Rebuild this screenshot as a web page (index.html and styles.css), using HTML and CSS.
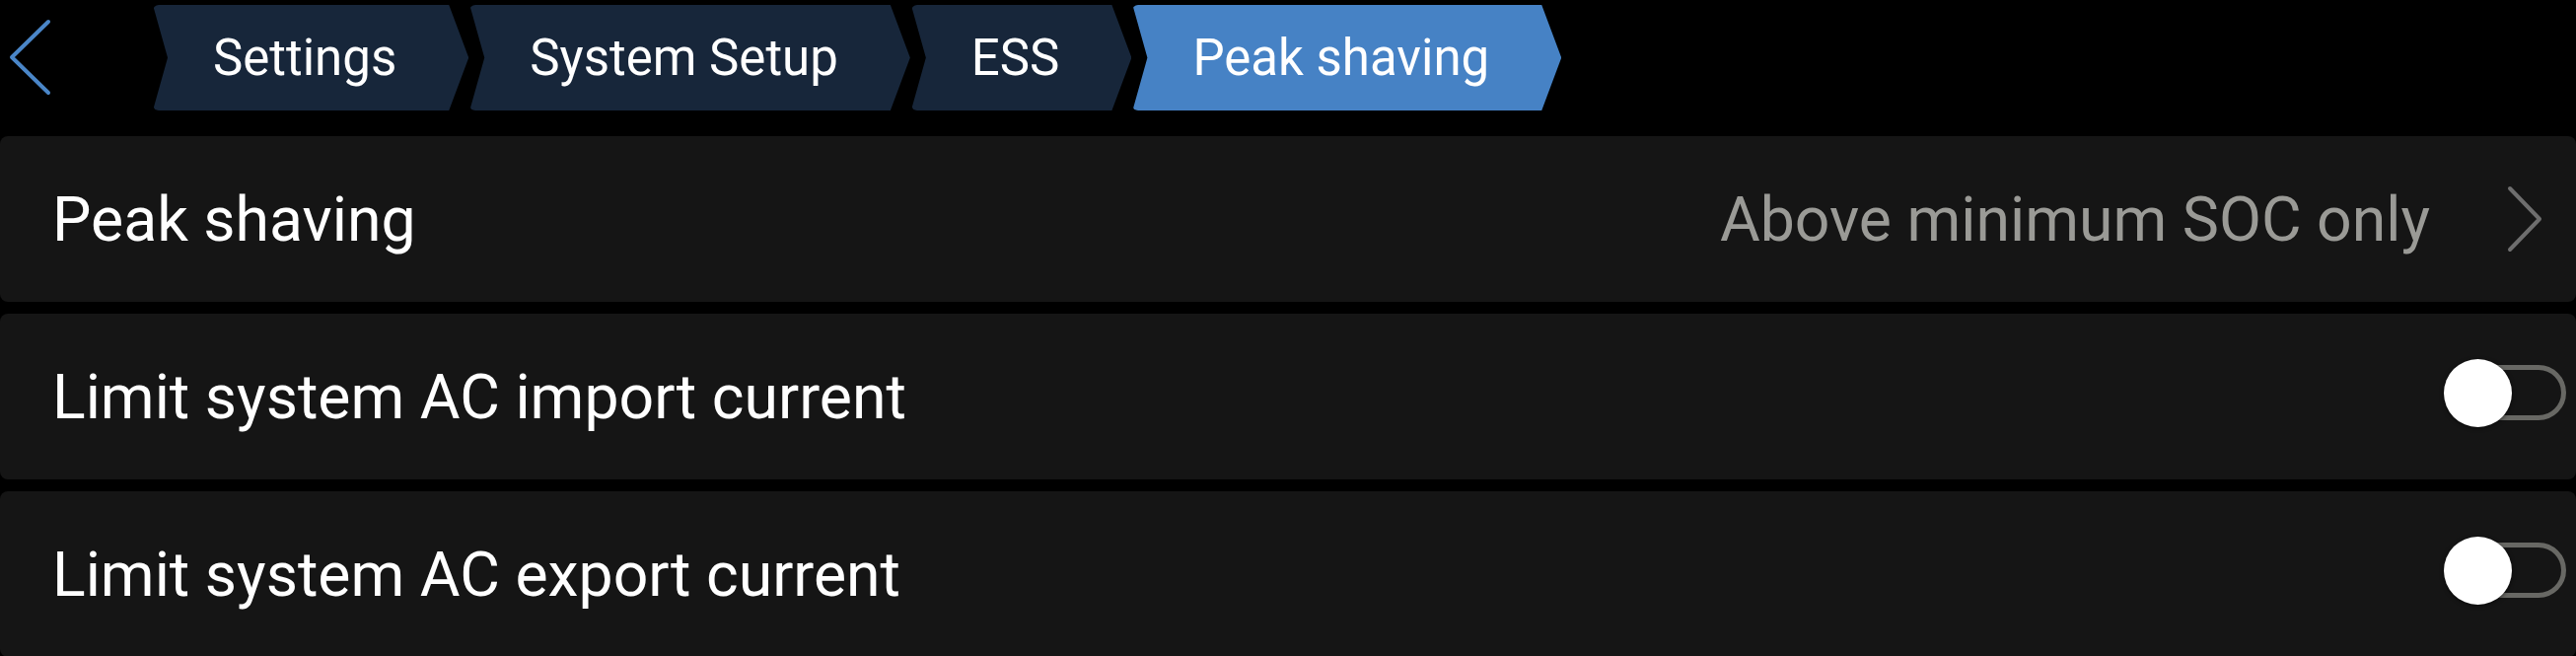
FILE: index.html
```html
<!DOCTYPE html>
<html lang="en">
<head>
    <meta charset="UTF-8">
    <meta name="viewport" content="width=device-width, initial-scale=1.0">
    <title>Peak shaving</title>
    <link rel="stylesheet" href="styles.css">
</head>
<body>
    <div class="header">
        <button class="back-button" aria-label="Back">
            <svg width="44" height="80" viewBox="0 0 44 80">
                <polyline points="40,3 3,39 40,75" fill="none" stroke="#4a86c8" stroke-width="4" stroke-linecap="round" stroke-linejoin="round"/>
            </svg>
        </button>
        <nav class="breadcrumbs">
            <div class="crumb">Settings</div>
            <div class="crumb">System Setup</div>
            <div class="crumb">ESS</div>
            <div class="crumb active">Peak shaving</div>
        </nav>
    </div>

    <div class="list">
        <div class="list-item">
            <span class="item-label">Peak shaving</span>
            <div class="item-value">
                <span class="value-text">Above minimum SOC only</span>
                <svg class="chevron" width="36" height="68" viewBox="0 0 36 68">
                    <polyline points="3,3 33,34 3,65" fill="none" stroke="#6e6e6e" stroke-width="4" stroke-linecap="round" stroke-linejoin="round"/>
                </svg>
            </div>
        </div>
        <div class="list-item">
            <span class="item-label">Limit system AC import current</span>
            <div class="switch"><span class="knob"></span></div>
        </div>
        <div class="list-item">
            <span class="item-label">Limit system AC export current</span>
            <div class="switch"><span class="knob"></span></div>
        </div>
    </div>
</body>
</html>
```

FILE: styles.css
```css
body {
    margin: 0;
    background: #000;
    color: #fff;
    font-family: Roboto, "Liberation Sans", sans-serif;
    overflow: hidden;
}

.header {
    display: flex;
    align-items: center;
    padding: 5px 0 26px;
}

.back-button {
    width: 155px;
    height: 107px;
    padding: 0 0 0 9px;
    border: none;
    background: none;
    display: flex;
    align-items: center;
    cursor: pointer;
}

.breadcrumbs {
    display: flex;
    gap: 1px;
}

.crumb {
    height: 107px;
    display: flex;
    align-items: center;
    padding: 0 73px 0 61px;
    font-size: 51px;
    color: #fff;
    background: #17263a;
    clip-path: polygon(0 0, calc(100% - 20px) 0, 100% 50%, calc(100% - 20px) 100%, 0 100%, 15px 50%);
    border-radius: 6px;
}

.crumb.active {
    background: #4682c5;
}

.list {
    display: flex;
    flex-direction: column;
    gap: 12px;
}

.list-item {
    height: 168px;
    background: #151515;
    border-radius: 8px;
    display: flex;
    align-items: center;
    justify-content: space-between;
    padding: 0 10px 0 53px;
}

.item-label {
    font-size: 62.5px;
    color: #fff;
}

.item-value {
    display: flex;
    align-items: center;
    gap: 78px;
    padding-right: 24px;
}

.value-text {
    font-size: 62.5px;
    color: #9a9a96;
}

/* toggle switch, off state */
.switch {
    position: relative;
    width: 112px;
    height: 56px;
    margin-bottom: 8px;
    box-sizing: border-box;
    border: 5px solid #686864;
    border-radius: 28px;
}

.switch .knob {
    position: absolute;
    left: -17px;
    top: -11.5px;
    width: 69px;
    height: 69px;
    border-radius: 50%;
    background: #fff;
    box-shadow: 0 1px 4px rgba(0, 0, 0, 0.6);
}
```
